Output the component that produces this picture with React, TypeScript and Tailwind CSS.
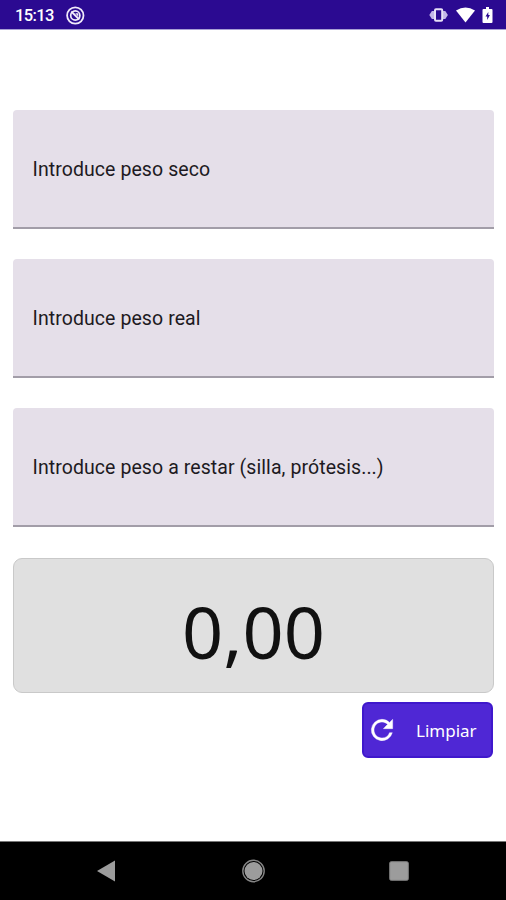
import React from "react";

const fields = [
  "Introduce peso seco",
  "Introduce peso real",
  "Introduce peso a restar (silla, prótesis...)",
];

function StatusBar() {
  return (
    <header className="flex h-[30px] shrink-0 items-center border-b border-[#a8a0d4] bg-[#2b0a91] pt-[2px] pl-[15px] text-white">
      <span className="w-[50px] pt-[2px] font-['Roboto',sans-serif] text-[16.5px] leading-none font-medium tracking-[-0.6px] whitespace-nowrap">15:13</span>
      <svg className="h-[20px] w-[20px]" viewBox="0 0 20 20" fill="none" stroke="#f0eafa">
        <circle cx="10.3" cy="9.5" r="8.2" strokeWidth="1.8" />
        <circle cx="10.3" cy="9.5" r="4.6" strokeWidth="1.7" />
        <path d="M6.3 5.5l8 8" strokeWidth="1.8" />
        <path d="M10.3 7.2h3v3.5z" fill="#f0eafa" stroke="none" />
      </svg>
      <div className="ml-auto flex items-center pr-[12px] pb-[1px]">
        <svg className="h-[16px] w-[20px]" viewBox="0 0 20 16">
          <path d="M0.3 8l2.6-4h2.4v8H2.9zM18.9 8l-2.6-4h-2.4v8h2.4z" fill="#c3b6e8" />
          <rect x="6" y="2.2" width="7.2" height="11.6" rx="1" fill="#2b0a91" stroke="#e6e0f6" strokeWidth="2" />
        </svg>
        <svg className="ml-[7px] h-[16px] w-[20px]" viewBox="0 0 20 16">
          <path d="M0 3.5Q9.5-2.5 19 3.5L9.5 15.5z" fill="#fff" />
        </svg>
        <svg className="ml-[6px] h-[18px] w-[12px]" viewBox="0 0 12 18">
          <path d="M4 1h3v2h2.5a1 1 0 0 1 1 1v12a1 1 0 0 1-1 1h-8a1 1 0 0 1-1-1V4a1 1 0 0 1 1-1H4z" fill="#fff" />
          <path d="M6.3 6L3.5 10.6h1.7v3.4l2.7-4.9H6.3z" fill="#2b0a91" />
        </svg>
      </div>
    </header>
  );
}

function Field({ label }: { label: string }) {
  return (
    <div className="flex h-[119px] items-center rounded-t-[4px] border-b-2 border-[#a29da8] bg-[#e5dfe9] pt-[3px] pl-[19.5px] font-['Roboto',sans-serif] text-[19.5px] tracking-[0.08px] whitespace-nowrap text-[#1d1a22]">
      {label}
    </div>
  );
}

export default function App() {
  return (
    <div className="flex h-[900px] w-[506px] flex-col overflow-hidden bg-white">
      <StatusBar />
      <main className="flex grow flex-col pt-[80px] pr-[12px] pl-[13px]">
        <div className="flex flex-col gap-[30px]">
          {fields.map((label) => (
            <Field key={label} label={label} />
          ))}
        </div>
        <div className="mt-[31px] flex h-[135px] items-center justify-center rounded-[9px] border border-[#c9c9c9] bg-[#e0e0e0] pt-[11px] font-['Noto_Sans',sans-serif] text-[72px] leading-none text-[#111]">
          0,00
        </div>
        <button className="mt-[9px] mr-[1px] flex h-[56px] w-[131px] items-center self-end rounded-[6px] border-2 border-[#3f18cc] bg-[#4f27d5] pl-[2px] text-white">
          <svg className="h-[32px] w-[32px]" viewBox="0 0 24 24" fill="currentColor" stroke="currentColor" strokeWidth="0.3">
            <path d="M17.65 6.35A7.958 7.958 0 0 0 12 4a8 8 0 1 0 7.73 10h-2.08A5.99 5.99 0 0 1 12 18c-3.31 0-6-2.69-6-6s2.69-6 6-6c1.66 0 3.14.69 4.22 1.78L13 11h7V4z" />
          </svg>
          <span className="ml-[18px] font-['Noto_Sans',sans-serif] text-[17px] leading-none">Limpiar</span>
        </button>
      </main>
      <nav className="flex h-[59px] shrink-0 items-center justify-between border-t border-[#777] bg-black pr-[97px] pl-[96px]">
        <svg className="h-[22px] w-[20px]" viewBox="0 0 20 22">
          <path d="M1 11L19 0.5v21z" fill="#9c9c9c" />
        </svg>
        <svg className="h-[24px] w-[24px]" viewBox="0 0 24 24">
          <circle cx="12.5" cy="12" r="9" fill="#9c9c9c" />
          <circle cx="12.5" cy="12" r="10.7" fill="none" stroke="#858585" strokeWidth="1.4" />
        </svg>
        <svg className="h-[20px] w-[20px]" viewBox="0 0 20 20">
          <rect x="0.7" y="0.7" width="18.6" height="18.6" rx="1.5" fill="#9c9c9c" stroke="#808080" />
        </svg>
      </nav>
    </div>
  );
}
